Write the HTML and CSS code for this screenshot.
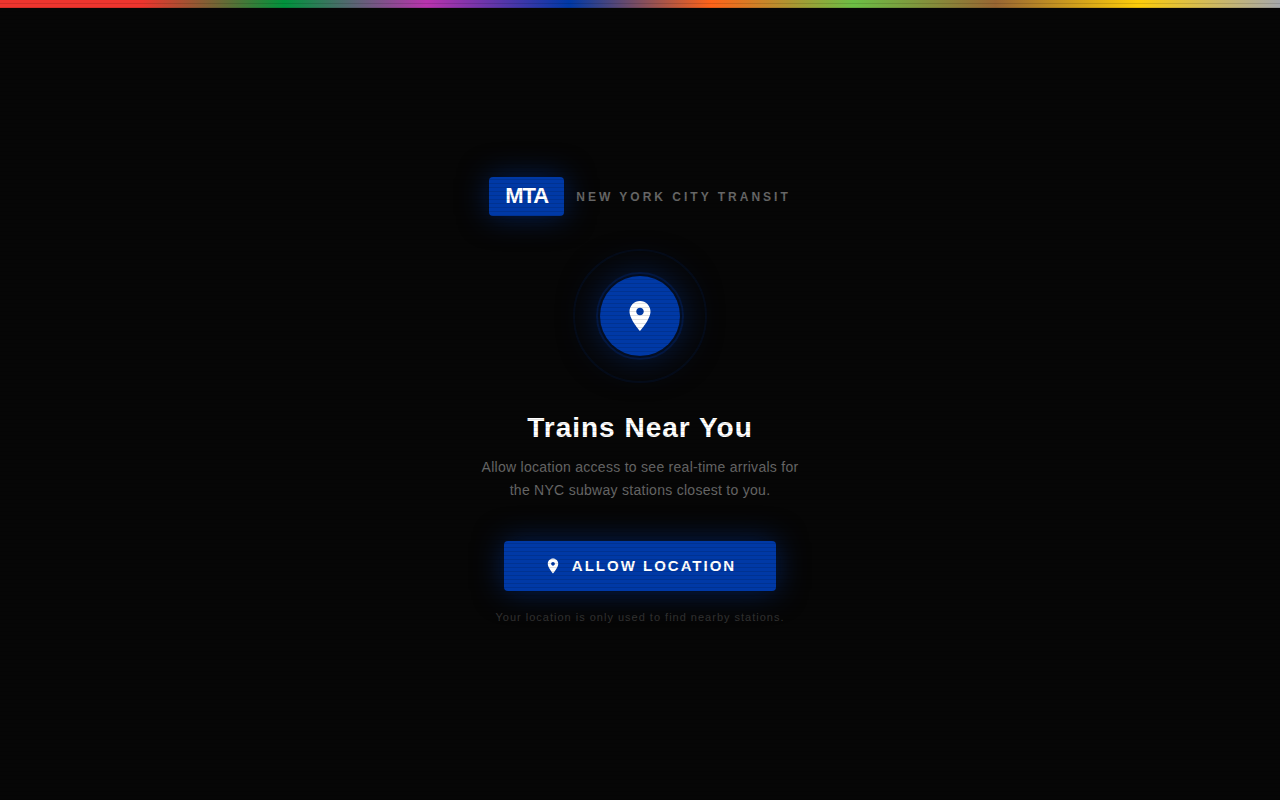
FILE: index.html
```html
<!DOCTYPE html>
<html lang="en">
  <head>
    <meta charset="UTF-8" />
    <meta name="viewport" content="width=device-width, initial-scale=1.0" />
    <title>Trains Near You</title>
    <link rel="stylesheet" href="styles.css">
  </head>

  <body>
    <div class="line-stripe"></div>

    <main class="location-screen">
      <div class="brand">
        <span class="brand-logo">MTA</span>
        <span class="brand-name">New York City Transit</span>
      </div>

      <div class="beacon">
        <span class="beacon-ring beacon-ring-inner"></span>
        <span class="beacon-ring beacon-ring-outer"></span>
        <svg class="beacon-icon" viewBox="0 0 24 24" aria-hidden="true">
          <path
            d="M12 2C8.13 2 5 5.13 5 9c0 5.25 7 13 7 13s7-7.75 7-13c0-3.87-3.13-7-7-7zm0 9.5c-1.38 0-2.5-1.12-2.5-2.5s1.12-2.5 2.5-2.5 2.5 1.12 2.5 2.5-1.12 2.5-2.5 2.5z"
          />
        </svg>
      </div>

      <h1 class="title">Trains Near You</h1>
      <p class="description">
        Allow location access to see real-time arrivals for the NYC subway
        stations closest to you.
      </p>

      <button type="button" class="allow-button">
        <svg class="allow-icon" viewBox="0 0 24 24" aria-hidden="true">
          <path
            d="M12 2C8.13 2 5 5.13 5 9c0 5.25 7 13 7 13s7-7.75 7-13c0-3.87-3.13-7-7-7zm0 9.5c-1.38 0-2.5-1.12-2.5-2.5s1.12-2.5 2.5-2.5 2.5 1.12 2.5 2.5-1.12 2.5-2.5 2.5z"
          />
        </svg>
        Allow Location
      </button>
      <p class="privacy-note">
        Your location is only used to find nearby stations.
      </p>
    </main>

    <div class="scanlines"></div>
  </body>
</html>
```

FILE: styles.css
```css
:root {
  --mta-blue: #0039a6;
}

* {
  box-sizing: border-box;
  margin: 0;
  padding: 0;
}

body {
  min-height: 100vh;
  display: flex;
  flex-direction: column;
  background: #060606;
  color: white;
  font-family: "Liberation Sans", Arial, Helvetica, sans-serif;
}

/* one stop for each subway line colour */
.line-stripe {
  height: 8px;
  background: linear-gradient(
    90deg,
    #ee352e,
    #ee352e,
    #00933c,
    #b933ad,
    #0039a6,
    #ff6319,
    #6cbe45,
    #996633,
    #fccc0a,
    #a7a9ac
  );
}

.location-screen {
  flex: 1;
  display: flex;
  flex-direction: column;
  align-items: center;
  justify-content: center;
  padding: 24px 24px 31px;
  text-align: center;
}

.brand {
  display: flex;
  align-items: center;
  gap: 12px;
  margin-bottom: 60px;
}

.brand-logo {
  padding: 6px 16px 8px;
  border-radius: 4px;
  background: var(--mta-blue);
  box-shadow: 0 0 30px rgba(0, 57, 166, 0.5);
  font-size: 22px;
  font-weight: bold;
  line-height: 25px;
  letter-spacing: -1px;
}

.brand-name {
  color: #666;
  font-size: 12px;
  font-weight: bold;
  letter-spacing: 3px;
  text-transform: uppercase;
}

.beacon {
  position: relative;
  display: flex;
  align-items: center;
  justify-content: center;
  width: 80px;
  height: 80px;
  margin-bottom: 56px;
  border-radius: 50%;
  background: var(--mta-blue);
  box-shadow: 0 0 40px rgba(0, 57, 166, 0.5);
}

.beacon-ring {
  position: absolute;
  border: 2px solid var(--mta-blue);
  border-radius: 50%;
}

.beacon-ring-inner {
  inset: -4px;
  opacity: 0.25;
}

.beacon-ring-outer {
  inset: -27px;
  opacity: 0.1;
}

.beacon-icon {
  width: 36px;
  height: 36px;
  fill: white;
}

.title {
  margin-bottom: 12px;
  font-size: 28px;
  line-height: 32px;
  letter-spacing: 1px;
}

.description {
  max-width: 320px;
  margin-bottom: 39px;
  color: #666;
  font-size: 14px;
  line-height: 23px;
  letter-spacing: 0.02em;
}

.allow-button {
  display: flex;
  align-items: center;
  gap: 10px;
  padding: 16px 40px;
  border: none;
  border-radius: 4px;
  background: var(--mta-blue);
  box-shadow: 0 0 30px rgba(0, 57, 166, 0.5);
  color: white;
  font-family: inherit;
  font-size: 15px;
  font-weight: bold;
  line-height: 18px;
  letter-spacing: 2px;
  text-transform: uppercase;
  cursor: pointer;
}

.allow-icon {
  width: 18px;
  height: 18px;
  fill: white;
}

.privacy-note {
  margin-top: 20px;
  color: #333;
  font-size: 11px;
  line-height: 13px;
  letter-spacing: 1px;
}

.scanlines {
  position: fixed;
  inset: 0;
  background: repeating-linear-gradient(
    transparent,
    transparent 3px,
    rgba(0, 0, 0, 0.12) 3px,
    rgba(0, 0, 0, 0.12) 4px
  );
  pointer-events: none;
}
```
